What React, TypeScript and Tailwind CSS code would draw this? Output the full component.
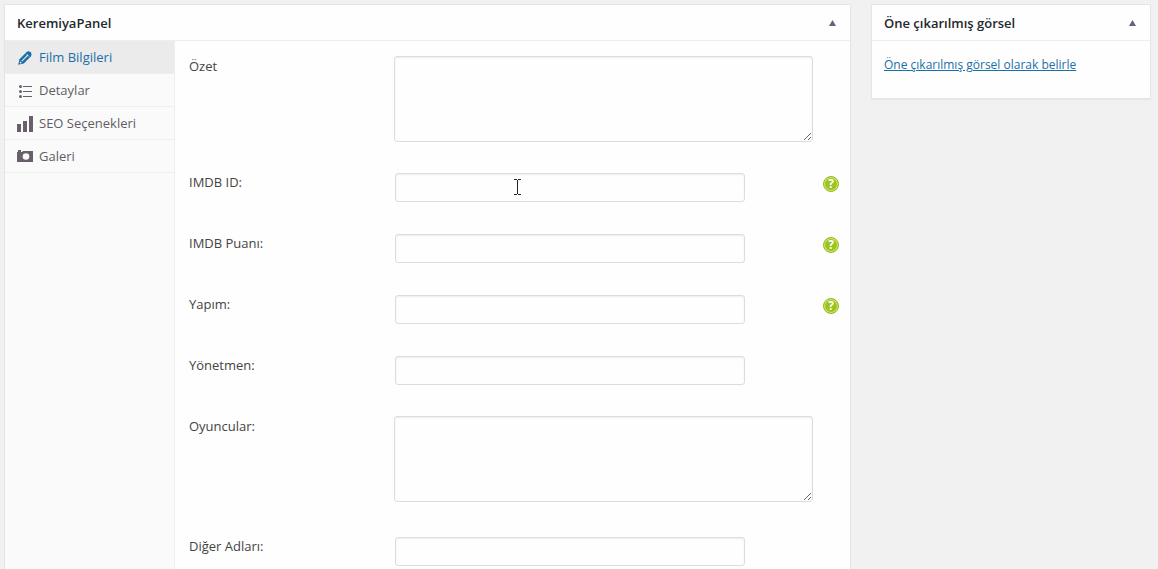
import { useState } from 'react';
import clsx from 'clsx';

interface Field {
    id: string;
    label: string;
    multiline?: boolean;
    help?: boolean;
    spacing: string;
}

const fields: Field[] = [
    { id: 'ozet', label: 'Özet', multiline: true, spacing: 'pt-[15px] pb-4' },
    { id: 'imdb-id', label: 'IMDB ID:', help: true, spacing: 'pt-3.5 pb-4' },
    { id: 'imdb-puani', label: 'IMDB Puanı:', help: true, spacing: 'pt-3.5 pb-4' },
    { id: 'yapim', label: 'Yapım:', help: true, spacing: 'pt-3.5 pb-4' },
    { id: 'yonetmen', label: 'Yönetmen:', spacing: 'pt-3.5 pb-4' },
    { id: 'oyuncular', label: 'Oyuncular:', multiline: true, spacing: 'pt-3.5 pb-5' },
    { id: 'diger-adlari', label: 'Diğer Adları:', spacing: 'pt-3.5 pb-4' },
];

const PencilIcon = () => (
    <svg viewBox="0 0 16 16" className="h-4 w-4" aria-hidden="true">
        <path d="M1.200 14.800l1.300-5.600L9.600 2Q11.500.4 13.600 2.300 15.500 4.300 14 6.200L6.800 13.400z" fill="#1b6fa8" />
        <path d="M4.800 11.100l6.200-6.200" stroke="#ebebeb" strokeWidth="1.200" />
        <path d="M9.300 3.800l3 3" stroke="#ebebeb" strokeWidth=".6" />
        <path d="M3.100 11.200l1.800 1.800-1.500.4-.7-.7z" fill="#ebebeb" />
    </svg>
);

const ListIcon = () => (
    <svg viewBox="0 0 16 16" className="h-4 w-4" aria-hidden="true" fill="#685f6b">
        <circle cx="3.500" cy="3.500" r="1.500" />
        <circle cx="3.500" cy="8.500" r="1.500" />
        <circle cx="3.500" cy="13.500" r="1.500" />
        <path d="M6 3h9v1H6zM6 8h9v1H6zM6 13h9v1H6z" />
    </svg>
);

const ChartIcon = () => (
    <svg viewBox="0 0 16 16" className="h-4 w-4" aria-hidden="true" fill="#685f6b">
        <path d="M0 8h4v8H0zM6 5h4v11H6zM12 0h4v16h-4z" />
    </svg>
);

const CameraIcon = () => (
    <svg viewBox="0 0 16 16" className="h-4 w-4" aria-hidden="true">
        <path d="M1 1h3v2H1zM0 3h5l1-1h10v11H0z" fill="#685f6b" />
        <circle cx="9" cy="7.500" r="3.300" fill="#fafafa" />
    </svg>
);

const tabs = [
    { label: 'Film Bilgileri', Icon: PencilIcon },
    { label: 'Detaylar', Icon: ListIcon },
    { label: 'SEO Seçenekleri', Icon: ChartIcon },
    { label: 'Galeri', Icon: CameraIcon },
];

function HelpButton({ label }: { label: string }) {
    return (
        <button
            type="button"
            aria-label={`${label} yardım`}
            className="mt-1 flex h-4 w-4 items-center justify-center rounded-full border border-[#98bf1c] bg-[#9dc41c] text-[12px] leading-none font-bold text-white inset-ring inset-ring-[#d3e68a]"
        >
            ?
        </button>
    );
}

function PanelHeader({ title }: { title: string }) {
    return (
        <div className="flex h-9 items-center justify-between border-b border-[#eeeeee] pr-3.5 pl-3">
            <h2 className="text-[13px] leading-5 font-semibold text-[#23282d]">{title}</h2>
            <button type="button" aria-label={`${title} aç/kapat`}>
                <svg viewBox="0 0 7 6" className="h-1.5 w-[7px]" fill="#685f7b" aria-hidden="true">
                    <path d="M3.500 0L7 6H0z" />
                </svg>
            </button>
        </div>
    );
}

function FieldRow({ field }: { field: Field }) {
    return (
        <div className={clsx('flex pr-[11px] pl-3.5', field.spacing)}>
            <label htmlFor={field.id} className="w-[205px] shrink-0 leading-5">
                {field.label}
            </label>
            <div className="min-w-0 flex-1">
                {field.multiline ? (
                    <textarea
                        id={field.id}
                        className="block h-[86px] w-full rounded-[3px] border border-[#dddddd] bg-[#fefefe] px-1.5 py-0.5 shadow-[inset_0_1px_2px_rgba(0,0,0,0.07)]"
                    />
                ) : (
                    <input
                        id={field.id}
                        type="text"
                        className="m-px block h-[29px] w-[350px] max-w-full rounded-[3px] border border-[#dddddd] bg-[#fefefe] px-1.5 shadow-[inset_0_1px_2px_rgba(0,0,0,0.07)]"
                    />
                )}
            </div>
            <div className="ml-2.5 w-4 shrink-0">{field.help && <HelpButton label={field.label} />}</div>
        </div>
    );
}

export default function App() {
    const [active, setActive] = useState('Film Bilgileri');

    return (
        <div className="relative flex h-screen items-start gap-5 overflow-hidden bg-[#f1f1f1] pt-1 pr-[7px] pl-1 font-['Open_Sans','Noto_Sans',sans-serif] text-[13px] text-[#444444]">
            <main className="min-w-0 flex-1 border border-[#e5e5e5] bg-[#fefefe] shadow-[0_1px_1px_rgba(0,0,0,0.04)]">
                <PanelHeader title="KeremiyaPanel" />
                <div className="flex">
                    <nav className="w-[170px] shrink-0 border-r border-[#eeeeee] bg-[#fafafa]">
                        {tabs.map(({ label, Icon }) => (
                            <button
                                key={label}
                                type="button"
                                onClick={() => setActive(label)}
                                className={clsx(
                                    'flex h-[33px] w-full items-center gap-1.5 border-b border-[#eeeeee] pt-0.5 pl-3',
                                    active === label ? 'bg-[#ebebeb] text-[#1b6fa8]' : 'text-[#625c66]',
                                )}
                            >
                                <Icon />
                                {label}
                            </button>
                        ))}
                    </nav>
                    <form className="min-w-0 flex-1">
                        {fields.map((field) => (
                            <FieldRow key={field.id} field={field} />
                        ))}
                    </form>
                </div>
            </main>

            <aside className="w-[280px] shrink-0 border border-[#e5e5e5] bg-[#fefefe] shadow-[0_1px_1px_rgba(0,0,0,0.04)]">
                <PanelHeader title="Öne çıkarılmış görsel" />
                <div className="px-3 pt-3.5 pb-[23px]">
                    <a href="#" className="block text-xs leading-5 text-[#1b6fa8] underline">
                        Öne çıkarılmış görsel olarak belirle
                    </a>
                </div>
            </aside>

            {/* text cursor over the IMDB ID box */}
            <svg viewBox="0 0 7 16" className="pointer-events-none absolute top-[179px] left-[514px] h-4 w-[7px]" aria-hidden="true">
                <path d="M0 0h3v1H0zM4 0h3v1H4zM3 1h1v14H3zM0 15h3v1H0zM4 15h3v1H4z" fill="#25222e" />
            </svg>
        </div>
    );
}
